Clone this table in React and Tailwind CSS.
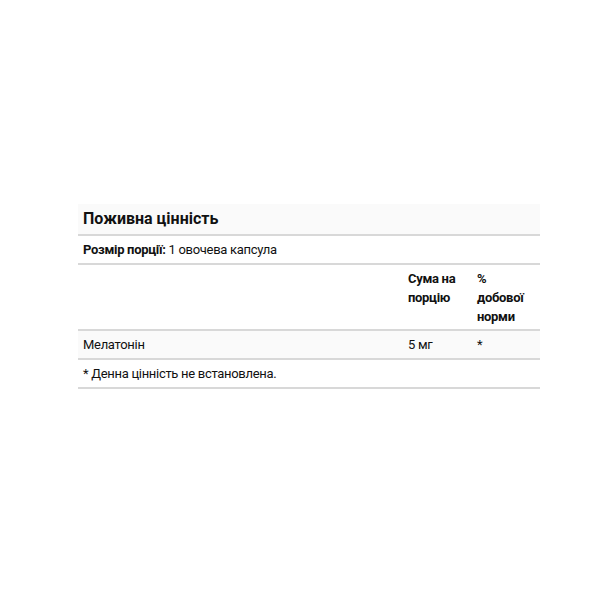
import React from "react";

const App = () => {
  return (
    <div className="w-[608px] h-[608px] bg-white pt-[204px] font-['Roboto',sans-serif] text-[13px] leading-[19px] tracking-[-0.3px] text-[#111]">
      <div className="mx-[78px] w-[462px]">
        {/* Title */}
        <div className="bg-[#fafafa] border-b-2 border-[#d8d8d8] px-[5px] pt-[5px] pb-[5px]">
          <h2 className="text-[16px] leading-[20px] font-bold tracking-normal">Поживна цінність</h2>
        </div>

        {/* Serving size */}
        <div className="border-b-2 border-[#d8d8d8] px-[5px] py-[4px]">
          <span className="font-bold">Розмір порції:</span> 1 овочева капсула
        </div>

        {/* Column headers */}
        <div className="grid grid-cols-[325px_69px_1fr] border-b-2 border-[#d8d8d8] pt-[4px] pb-[3px] font-bold">
          <div></div>
          <div className="pl-[5px] pr-[4px]">Сума на порцію</div>
          <div className="pl-[5px]">
            %<br />
            добової норми
          </div>
        </div>

        {/* Melatonin row */}
        <div className="grid grid-cols-[325px_69px_1fr] bg-[#fafafa] border-b-2 border-[#d8d8d8] py-[4px]">
          <div className="pl-[5px]">Мелатонін</div>
          <div className="pl-[5px]">5 мг</div>
          <div className="pl-[5px]">*</div>
        </div>

        {/* Footnote */}
        <div className="border-b-2 border-[#d8d8d8] px-[5px] py-[4px]">
          * Денна цінність не встановлена.
        </div>
      </div>
    </div>
  );
};

export default App;
